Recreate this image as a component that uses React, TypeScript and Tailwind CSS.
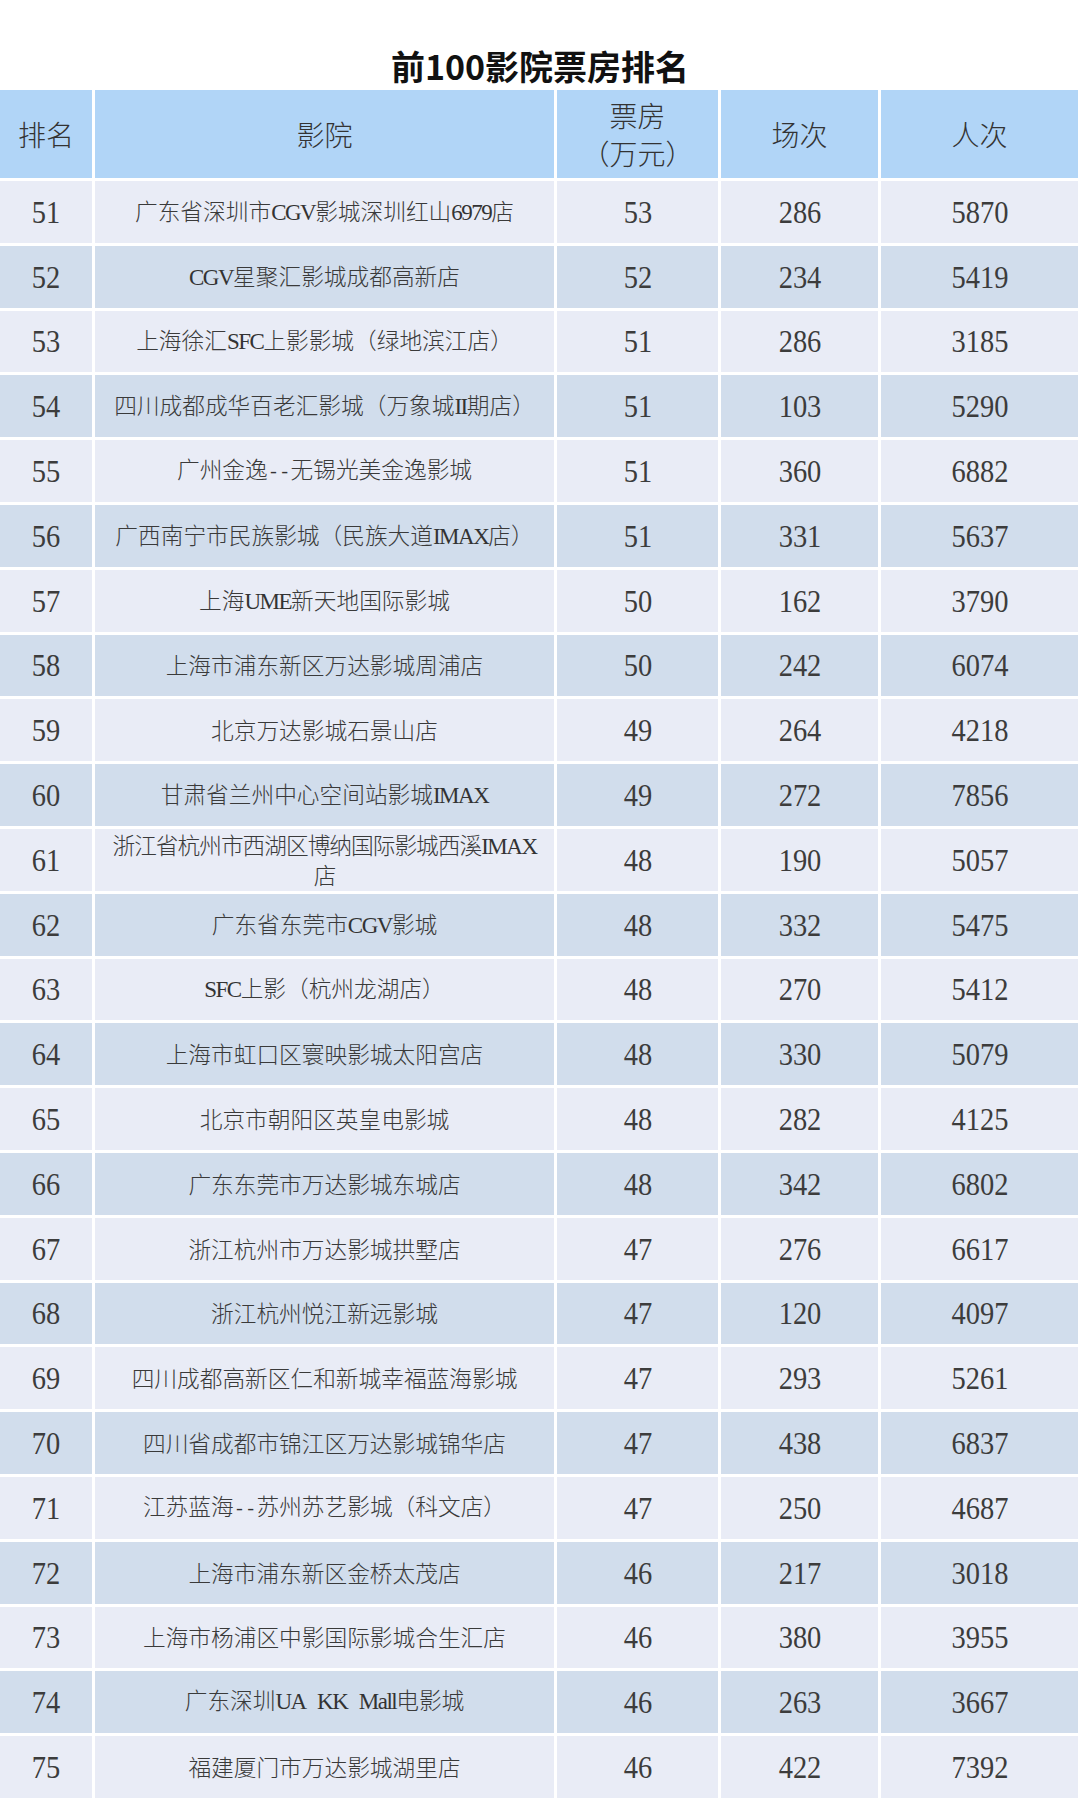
import React from "react";

type Row = [string, string, string, string, string];

const rows: Row[] = [
  ["51", "广东省深圳市CGV影城深圳红山6979店", "53", "286", "5870"],
  ["52", "CGV星聚汇影城成都高新店", "52", "234", "5419"],
  ["53", "上海徐汇SFC上影影城（绿地滨江店）", "51", "286", "3185"],
  ["54", "四川成都成华百老汇影城（万象城II期店）", "51", "103", "5290"],
  ["55", "广州金逸--无锡光美金逸影城", "51", "360", "6882"],
  ["56", "广西南宁市民族影城（民族大道IMAX店）", "51", "331", "5637"],
  ["57", "上海UME新天地国际影城", "50", "162", "3790"],
  ["58", "上海市浦东新区万达影城周浦店", "50", "242", "6074"],
  ["59", "北京万达影城石景山店", "49", "264", "4218"],
  ["60", "甘肃省兰州中心空间站影城IMAX", "49", "272", "7856"],
  ["61", "浙江省杭州市西湖区博纳国际影城西溪IMAX\n店", "48", "190", "5057"],
  ["62", "广东省东莞市CGV影城", "48", "332", "5475"],
  ["63", "SFC上影（杭州龙湖店）", "48", "270", "5412"],
  ["64", "上海市虹口区寰映影城太阳宫店", "48", "330", "5079"],
  ["65", "北京市朝阳区英皇电影城", "48", "282", "4125"],
  ["66", "广东东莞市万达影城东城店", "48", "342", "6802"],
  ["67", "浙江杭州市万达影城拱墅店", "47", "276", "6617"],
  ["68", "浙江杭州悦江新远影城", "47", "120", "4097"],
  ["69", "四川成都高新区仁和新城幸福蓝海影城", "47", "293", "5261"],
  ["70", "四川省成都市锦江区万达影城锦华店", "47", "438", "6837"],
  ["71", "江苏蓝海--苏州苏艺影城（科文店）", "47", "250", "4687"],
  ["72", "上海市浦东新区金桥太茂店", "46", "217", "3018"],
  ["73", "上海市杨浦区中影国际影城合生汇店", "46", "380", "3955"],
  ["74", "广东深圳UA KK Mall电影城", "46", "263", "3667"],
  ["75", "福建厦门市万达影城湖里店", "46", "422", "7392"],
];

function NameText({ text, tight }: { text: string; tight?: boolean }) {
  const lines = text.split("\n");
  return (
    <div className={`text-center leading-[28px] ${tight ? "tracking-[-1px]" : ""}`}>
      {lines.map((line, li) => {
        const parts = line.split(/([A-Za-z0-9]+|[\- ]+)/).filter((p) => p.length > 0);
        return (
          <div key={li}>
            {parts.map((p, i) => {
              if (/^[A-Za-z0-9]+$/.test(p)) {
                return (
                  <span
                    key={i}
                    className="font-['Liberation_Serif'] text-[23px] tracking-[-1.5px] text-[#333]"
                  >
                    {p}
                  </span>
                );
              }
              if (/^[\- ]+$/.test(p)) {
                return (
                  <span
                    key={i}
                    className="font-['Liberation_Mono'] text-[19px] tracking-normal whitespace-pre text-[#333]"
                  >
                    {p}
                  </span>
                );
              }
              return <span key={i}>{p}</span>;
            })}
          </div>
        );
      })}
    </div>
  );
}

function Num({ v }: { v: string }) {
  return (
    <span className="inline-block font-['Liberation_Serif'] text-[32px] leading-none scale-x-[0.89] text-[#3c3c3c]">
      {v}
    </span>
  );
}

const head = "bg-[#b1d5f7] flex items-center justify-center text-[28px] font-light text-[#333]";

export default function App() {
  return (
    <div className="w-[1080px] h-[1800px] overflow-hidden bg-white font-['Noto_Sans_CJK_SC',sans-serif]">
      <div className="h-[90px] pt-[46px] text-center text-[34px] leading-[40px] font-bold text-[#111]">
        前100影院票房排名
      </div>
      <div className="grid grid-cols-[92px_459px_161px_157px_197px] grid-rows-[88px] auto-rows-[61.8px] gap-[3px] text-[#3c3c3c]">
        <div className={head}>排名</div>
        <div className={head}>影院</div>
        <div className={`${head} flex-col leading-[38px]`}>
          <div>票房</div>
          <div>（万元）</div>
        </div>
        <div className={head}>场次</div>
        <div className={head}>人次</div>
        {rows.map((r, idx) => {
          const bg = idx % 2 === 0 ? "bg-[#e9ecf6]" : "bg-[#d1ddec]";
          return (
            <React.Fragment key={r[0]}>
              <div className={`${bg} flex items-center justify-center`}>
                <Num v={r[0]} />
              </div>
              <div className={`${bg} flex items-center justify-center text-[22.7px] font-light text-[#3a3a3a]`}>
                <NameText text={r[1]} tight={r[0] === "61"} />
              </div>
              <div className={`${bg} flex items-center justify-center`}>
                <Num v={r[2]} />
              </div>
              <div className={`${bg} flex items-center justify-center`}>
                <Num v={r[3]} />
              </div>
              <div className={`${bg} flex items-center justify-center`}>
                <Num v={r[4]} />
              </div>
            </React.Fragment>
          );
        })}
      </div>
    </div>
  );
}
